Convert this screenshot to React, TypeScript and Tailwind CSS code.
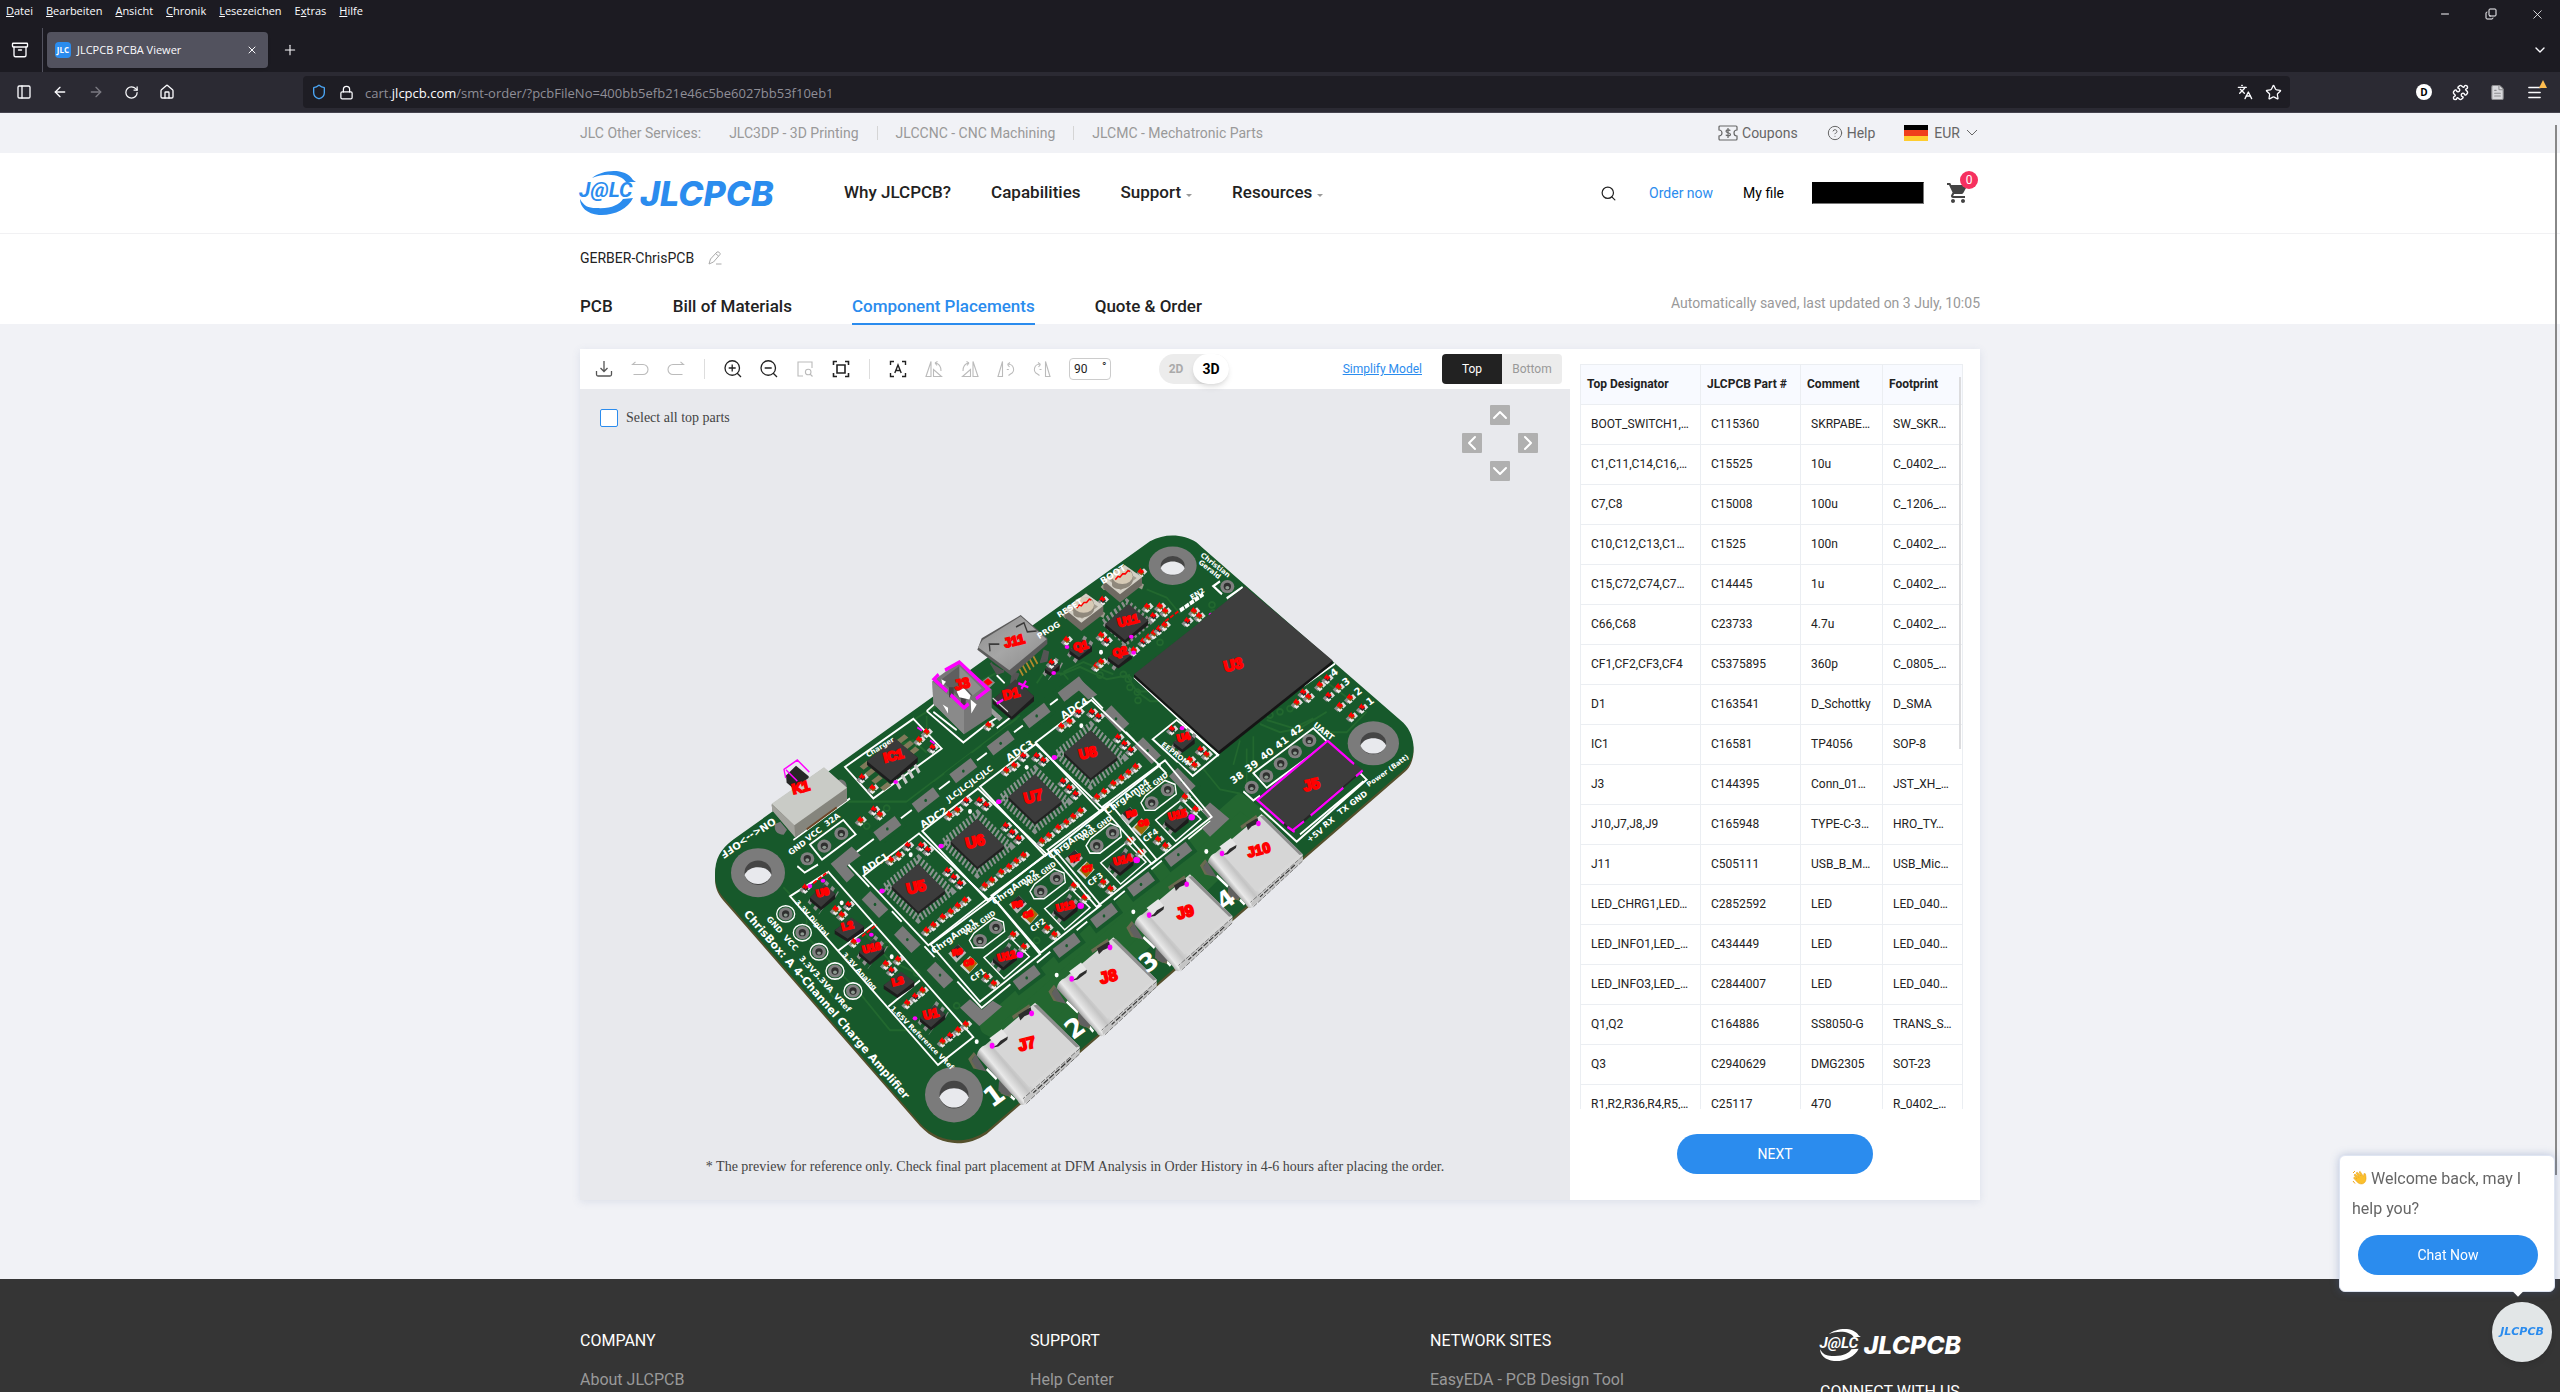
import React from "react";
import {
  ArrowLeft, ArrowRight, RotateCw, House, Shield, Lock, Languages, Star, Puzzle, X, Plus, Minus, Copy,
  ChevronDown, ChevronUp, ChevronLeft, ChevronRight, Search, CircleHelp, Menu, PanelLeft, Archive, FileText,
} from "lucide-react";
import { MdShoppingCart } from "react-icons/md";

/* ---------- Browser window ---------- */

const menus = ["Datei", "Bearbeiten", "Ansicht", "Chronik", "Lesezeichen", "Extras", "Hilfe"];

function IconButton({ label, children, className = "" }: { label: string; children: React.ReactNode; className?: string }) {
  return (
    <button type="button" aria-label={label} className={`flex shrink-0 items-center justify-center ${className}`}>
      {children}
    </button>
  );
}

function BrowserChrome() {
  return (
    <div className="shrink-0 bg-[#1c1b22] font-['Open_Sans',sans-serif] text-[#fbfbfe]">
      <div className="flex h-7 items-center justify-between pl-1.5">
        <div className="-mt-1.5 flex gap-[13px] text-[11px] leading-4">
          {menus.map((m) => (
            <button type="button" key={m}>
              {m === "Extras" ? <>E<u>x</u>tras</> : <><u>{m[0]}</u>{m.slice(1)}</>}
            </button>
          ))}
        </div>
        <div className="flex">
          <IconButton label="Minimize" className="w-[46px]"><Minus size={12} strokeWidth={2} /></IconButton>
          <IconButton label="Restore" className="w-[46px]"><Copy size={12} strokeWidth={2} className="-scale-x-100 rotate-180" /></IconButton>
          <IconButton label="Close window" className="w-[46px]"><X size={15} strokeWidth={1.3} /></IconButton>
        </div>
      </div>
      <div className="flex h-11 items-center">
        <IconButton label="Recent tabs" className="w-10"><Archive size={18} strokeWidth={1.8} /></IconButton>
        <div className="ml-0.5 h-11 w-px bg-[#52525e]" />
        <div className="ml-1 flex h-9 w-[221px] items-center rounded bg-[#52525e] pl-2 pr-2.5 shadow">
          <span className="flex h-4 w-4 items-center justify-center rounded-sm bg-[#2b8cee] text-[8px] font-bold">JLC</span>
          <span className="ml-1.5 flex-1 text-[11px]">JLCPCB PCBA Viewer</span>
          <IconButton label="Close tab"><X size={12} strokeWidth={2} /></IconButton>
        </div>
        <IconButton label="New tab" className="ml-3.5"><Plus size={16} strokeWidth={1.6} /></IconButton>
        <IconButton label="List all tabs" className="ml-auto mr-3"><ChevronDown size={16} strokeWidth={2} /></IconButton>
      </div>
      <div className="flex h-[41px] items-center border-b border-[#45444f] bg-[#2b2a33] pl-4 pr-[17px]">
        <div className="flex w-[287px] items-center gap-5">
          <IconButton label="Sidebar"><PanelLeft size={16} /></IconButton>
          <IconButton label="Back"><ArrowLeft size={16} /></IconButton>
          <IconButton label="Forward" className="text-[#7b7a82]"><ArrowRight size={16} /></IconButton>
          <IconButton label="Reload"><RotateCw size={15} /></IconButton>
          <IconButton label="Home"><House size={16} /></IconButton>
        </div>
        <div className="flex h-8 flex-1 items-center rounded bg-[#1e1d24] px-2">
          <Shield size={16} strokeWidth={2} className="text-[#4ba6f5]" />
          <Lock size={15} className="ml-3" />
          <div role="textbox" aria-label="Address" className="ml-[11px] flex-1 pt-0.5 text-[13px] leading-4 text-[#8f8e97]">
            cart.<span className="text-[#fbfbfe]">jlcpcb.com</span>/smt-order/?pcbFileNo=400bb5efb21e46c5be6027bb53f10eb1
          </div>
          <IconButton label="Translate page"><Languages size={16} /></IconButton>
          <IconButton label="Bookmark" className="ml-3"><Star size={17} strokeWidth={1.8} /></IconButton>
        </div>
        <div className="ml-[126px] flex items-center gap-5">
          <IconButton label="Account" className="h-4 w-4 rounded-full bg-white text-[10px] font-bold text-black">D</IconButton>
          <IconButton label="Extensions"><Puzzle size={17} /></IconButton>
          <IconButton label="Notes"><FileText size={17} className="fill-[#d8d8dc] text-[#8d8d90]" strokeWidth={1.5} /></IconButton>
          <div className="relative">
            <IconButton label="Menu"><Menu size={17} /></IconButton>
            <span className="absolute -right-1 -top-1 border-x-4 border-b-8 border-x-transparent border-b-[#ffbd4f]" />
          </div>
        </div>
      </div>
    </div>
  );
}

/* ---------- Site header ---------- */

function Logo({ className }: { className: string }) {
  return (
    <svg viewBox="0 0 199 44" className={className} role="img" aria-label="JLCPCB">
      <path d="M12 7C22-1 45-4 53 9L56 11 46 11C42 4 27 1 12 7Z" fill="currentColor" />
      <path d="M0 28C4 35 8 37 16 37C31 38 39 34 43 28L53 27C48 38 33 45 19 44C7 43 0 36 0 28Z" fill="currentColor" />
      <text x="-1" y="26" fill="currentColor" fontFamily="Roboto" fontStyle="italic" fontWeight="700" fontSize="21">J@LC</text>
      <text x="60" y="35" fill="currentColor" fontFamily="Inter" fontStyle="italic" fontWeight="800" fontSize="34">JLCPCB</text>
    </svg>
  );
}

function ServiceBar() {
  return (
    <div className="bg-[#f1f2f6]">
      <div className="mx-auto flex h-10 max-w-[1400px] items-center text-sm text-[#999]">
        <span>JLC Other Services:</span>
        <a href="#3d" className="ml-7">JLC3DP - 3D Printing</a>
        <span className="mx-[18px] h-3.5 w-px bg-[#d5d5d5]" />
        <a href="#cnc">JLCCNC - CNC Machining</a>
        <span className="mx-[18px] h-3.5 w-px bg-[#d5d5d5]" />
        <a href="#mc">JLCMC - Mechatronic Parts</a>
        <div className="ml-auto mr-0.5 flex items-center text-[#666]">
          <a href="#coupons" className="flex items-center gap-1">
            <svg width="20" height="16" viewBox="0 0 20 16" fill="none" stroke="currentColor" strokeWidth="1.2">
              <path d="M2 1h16a1 1 0 0 1 1 1v3a3 3 0 0 0 0 6v3a1 1 0 0 1-1 1H2a1 1 0 0 1-1-1v-3a3 3 0 0 0 0-6V2a1 1 0 0 1 1-1z" />
              <path d="M12.300 5.600c-.5-.9-4.300-1.200-4.300.6s4.500 1.300 4.500 3.200-4 1.700-4.700.3M10 3v10" />
            </svg>
            Coupons
          </a>
          <a href="#help" className="ml-[29px] flex items-center gap-1"><CircleHelp size={16} strokeWidth={1.5} />Help</a>
          <button type="button" className="ml-[29px] flex items-center">
            <svg width="24" height="16" viewBox="0 0 24 16"><path fill="#000" d="M0 0h24v6H0z" /><path fill="#f0401c" d="M0 5h24v6H0z" /><path fill="#ffcd2e" d="M0 11h24v5H0z" /></svg>
            <span className="ml-1.5">EUR</span>
            <svg className="ml-1.5" width="12" height="8" viewBox="0 0 12 8" fill="none" stroke="currentColor"><path d="M1 1l5 5 5-5" /></svg>
          </button>
        </div>
      </div>
    </div>
  );
}

function Caret() {
  return <span className="ml-[5px] mt-1 border-x-[3px] border-t-[3px] border-x-transparent border-t-[#999]" />;
}

function MainHeader() {
  return (
    <header className="border-b border-[#f1f1f3] bg-white">
      <div className="mx-auto flex h-20 max-w-[1400px] items-center text-[#222]">
        <a href="#home"><Logo className="h-11 w-[199px] overflow-visible text-[#2b8cee]" /></a>
        <nav className="ml-[65px] flex gap-10 text-[17px] font-medium">
          <a href="#why">Why JLCPCB?</a>
          <a href="#cap">Capabilities</a>
          <a href="#support" className="flex items-center">Support<Caret /></a>
          <a href="#resources" className="flex items-center">Resources<Caret /></a>
        </nav>
        <div className="ml-auto flex items-center text-sm">
          <IconButton label="Search"><Search size={17} strokeWidth={1.7} /></IconButton>
          <a href="#order" className="ml-8 text-[#2b8cee]">Order now</a>
          <a href="#files" className="ml-[30px] text-black">My file</a>
          <span className="ml-7 h-[22px] w-[112px] border border-[#777] border-l-black border-t-black bg-black" />
          <a href="#cart" aria-label="Cart" className="relative ml-[22px] mr-2.5 text-[#444]">
            <MdShoppingCart size={24} />
            <span className="absolute -right-2 -top-2.5 flex h-[18px] w-[18px] items-center justify-center rounded-full bg-[#f6305f] text-xs text-white">0</span>
          </a>
        </div>
      </div>
    </header>
  );
}

function ProjectTabs() {
  return (
    <div className="bg-white">
      <div className="mx-auto max-w-[1400px]">
        <div className="flex h-12 items-center gap-3.5 text-sm text-[#222]">
          GERBER-ChrisPCB
          <IconButton label="Rename">
            <svg width="14" height="14" viewBox="0 0 14 14" fill="none" stroke="#aaa"><path d="M1 13l1.500-5 6.500-7c1-.8 4 1 3 2.500l-6.500 7.500zM8 13h5.500M7.500 2.500l3 2.500" /></svg>
          </IconButton>
        </div>
        <div className="flex h-[42px] items-start justify-between">
          <nav className="flex gap-[60px] text-[17px] font-medium leading-6 text-[#222]">
            <a href="#pcb" className="h-[43px] pt-3">PCB</a>
            <a href="#bom" className="h-[43px] pt-3">Bill of Materials</a>
            <a href="#cpl" className="relative h-[43px] border-b-2 border-[#2b8cee] pt-3 text-[#2b8cee]">Component Placements</a>
            <a href="#quote" className="h-[43px] pt-3">Quote &amp; Order</a>
          </nav>
          <span className="pt-[11px] text-sm text-[#999]">Automatically saved, last updated on 3 July, 10:05</span>
        </div>
      </div>
    </div>
  );
}

/* ---------- Viewer toolbar ---------- */

const dark = "#222";
const pale = "#bbb";
const tools: { name: string; color: string; art: React.ReactNode; gap?: boolean }[] = [
  { name: "Download", color: "#555", art: <path strokeWidth="1.300" d="M9 1v10M5.500 8l3.500 3.500L12.500 8M1.500 11v3.500a1.500 1.500 0 0 0 1.500 1.500h12a1.500 1.500 0 0 0 1.500-1.500V11" /> },
  { name: "Undo", color: pale, art: <path d="M4.500 1.800L1.500 4.500h10.500a5 5 0 0 1 0 10H2.500" /> },
  { name: "Redo", color: pale, art: <path d="M13.500 1.800l3 2.700H6a5 5 0 0 0 0 10h9.500" /> },
  { name: "Zoom in", color: dark, gap: true, art: <path strokeWidth="1.300" d="M15.500 8A7.200 7.200 0 1 1 1 8a7.200 7.200 0 0 1 14.500 0zM13.500 13.500l3.500 3.500M8.200 4.500v7M4.700 8h7" /> },
  { name: "Zoom out", color: dark, art: <path strokeWidth="1.300" d="M15.500 8A7.200 7.200 0 1 1 1 8a7.200 7.200 0 0 1 14.500 0zM13.500 13.500l3.500 3.500M4.700 8h7" /> },
  { name: "Zoom area", color: pale, art: <path d="M7 16H2V2h14v6M15 12a2.800 2.800 0 1 1-5.600 0 2.800 2.800 0 0 1 5.600 0zM14.500 14.500l2 2" /> },
  { name: "Fit", color: dark, art: <path strokeWidth="1.6" d="M1.500 5V1.500H5M13 1.500h3.500V5M16.500 13v3.500H13M5 16.500H1.500V13M5 5h8v8H5z" /> },
  { name: "Rotate automatically", color: dark, gap: true, art: <path strokeWidth="1.400" d="M1.500 5V1.500H5M13 1.500h3.500V5M16.500 13v3.500H13M5 16.500H1.500V13M5.800 13L9 5l3.200 8M7 10.500h4" /> },
  { name: "Mirror left", color: pale, art: <path d="M6 1.500v15H1zM8.500 16.500h8l-8-7zM10 3c4 .5 6 4 6 8M10 3l2.500-1.500M10 3l2 2.500" /> },
  { name: "Mirror right", color: pale, art: <path d="M12 1.500v15h5zM9.500 16.500h-8l8-7zM8 3c-4 .5-6 4-6 8M8 3L5.500 1.500M8 3L6 5.500" /> },
  { name: "Rotate left", color: pale, art: <path d="M5.500 1.500v15H1zM10.500 4.500a5 5 0 0 1 3 9.500l-2 1.500M10.500 4.500l2.500-2M10.500 4.500l2 2.500M9.800 9.500h2" /> },
  { name: "Rotate right", color: pale, art: <path d="M12.500 1.500v15H17zM7.500 4.500a5 5 0 0 0-3 9.500l2 1.500M7.500 4.500L5 2.500M7.500 4.500l-2 2.500M6.500 9.500h2" /> },
];

function Toolbar() {
  return (
    <div className="flex h-10 items-center bg-white pl-[15px] pr-2">
      <div className="flex items-center gap-[18px]">
        {tools.map((t) => (
          <React.Fragment key={t.name}>
            {t.gap && <span className="mx-px h-5 w-px bg-[#ddd]" />}
            <IconButton label={t.name}>
              <svg width="18" height="18" viewBox="0 0 18 18" fill="none" stroke={t.color} strokeWidth="1.100">{t.art}</svg>
            </IconButton>
          </React.Fragment>
        ))}
      </div>
      <label className="ml-[18px] flex h-[22px] w-[42px] items-center rounded-sm border border-[#ccc] pl-1 text-xs text-[#222]">
        <input aria-label="Angle" defaultValue="90" className="w-7 bg-transparent outline-none" />
        <span className="-mt-1">°</span>
      </label>
      <div className="ml-12 flex h-[30px] w-[70px] items-center rounded-full bg-[#ececec] text-xs font-bold">
        <button type="button" className="flex-1 text-[#aaa]">2D</button>
        <button type="button" className="h-[30px] w-9 rounded-full bg-white text-sm text-black shadow-md">3D</button>
      </div>
      <a href="#simplify" className="ml-auto text-xs text-[#2b8cee] underline">Simplify Model</a>
      <div className="ml-5 flex overflow-hidden rounded-sm text-xs">
        <button type="button" className="h-[30px] w-[60px] bg-[#222] text-white">Top</button>
        <button type="button" className="h-[30px] w-[60px] bg-[#ececec] text-[#999]">Bottom</button>
      </div>
    </div>
  );
}

/* ---------- Circuit board ---------- */
/* Shapes use a 2220 x 1568 grid which is drawn at one third wide and 1/2.45 high. */

const KX = 1 / 3;
const KY = 1 / 2.45;
type P = [number, number];

const shift = (pts: P[], dx: number, dy: number): P[] => pts.map(([x, y]) => [x + dx, y + dy]);

function Passive({ at, gold = true }: { at: P; gold?: boolean }) {
  return (
    <g transform={`translate(${at[0]} ${at[1]})`}>
      <path d="M-18 4l10-8 10 9-9 7z" fill="#8c8c8c" />
      <path d="M-1 -5l10-7 10 9-9 7z" fill="#dcdcdc" />
      <path d="M-9 6l8 7 9-6-7-7z" fill="#e9e9e9" />
      <path d="M-11 -3l11-7 10 9-9 7z" fill={gold ? "#8a5a10" : "#2c2c2c"} />
      <path d="M-8 -2l6-6 3 6 6-4" stroke="#f00" strokeWidth="6" fill="none" />
    </g>
  );
}

function Chip({ at, w = 42, h = 32, pins = true }: { at: P; w?: number; h?: number; pins?: boolean }) {
  const [x, y] = at;
  return (
    <g>
      {pins && (
        <path d={`M${x - w} ${y + 8}L${x - 4} ${y + h + 10}M${x + 4} ${y - h}L${x + w + 4} ${y}`} stroke="#8f8f8f" strokeWidth="22" strokeDasharray="11 11" />
      )}
      <path d={`M${x - w} ${y + 5}L${x + 6} ${y - h + 3}L${x + w} ${y - 4}V${y + 8}L${x - 5} ${y + h + 8}L${x - w} ${y + 14}Z`} fill="#1d1d1d" />
      <path d={`M${x - w} ${y + 5}L${x + 6} ${y - h}L${x + w} ${y - 4}L${x - 5} ${y + h}Z`} fill="#3a3a3a" />
    </g>
  );
}

function UsbC({ at, k }: { at: P; k: number }) {
  return (
    <g transform={`translate(${at[0]} ${at[1]}) scale(${k})`}>
      <path d="M-60 35l50-28M-170 120l-14 14 12 18 22 4M-95 190l4 22 26 8" stroke="#6a6a50" strokeWidth="9" fill="none" />
      <path d="M-168 122l-12 16 14 18 30 8zM-100 185l-2 24 22 12 26-8z" fill="#606060" />
      <path d="M5 0L135 104V122L-22 240Q-36 248-46 232L-165 125Q-160 106-140 100Z" fill="url(#shell)" />
      <path d="M0 6L125 104L-12 200L-118 104Z" fill="#d6d6d6" />
      <path d="M0 6L12 4L135 104L125 106Z" fill="#8e8e8e" />
      <path d="M134 110L-28 230L-26 240L132 122Z" fill="#c4c4c4" />
      <path d="M136 108L-30 228M134 122L-24 242" stroke="#555" strokeWidth="2" strokeDasharray="14 4" fill="none" />
      <path d="M110 132L0 214" stroke="#333" strokeWidth="3" strokeDasharray="16 5" />
      <path d="M-44 28l36-18 4 14-22 8-12 10z" fill="#2c2c2c" />
      <path d="M-128 84l36-22 16 16-32 22z" fill="#e6e6e6" />
      <path d="M-120 106l14-6 10-10 22-10-2 8-26 16-14 2z" fill="#2c2c2c" />
      <circle cx="-5" cy="25" r="7" fill="#f0f" />
      <circle cx="-120" cy="102" r="7" fill="#f0f" />
    </g>
  );
}

function Button3D({ at }: { at: P }) {
  return (
    <g transform={`translate(${at[0]} ${at[1]})`}>
      <path d="M-58 4l-8 8 10 8 8-4zM50 0l14 6-6 12-10-4z" fill="#9a9a8c" />
      <path d="M-58 -4L6 -42L58 -12V8L-8 50L-58 16Z" fill="#6f6a62" />
      <path d="M-58 -4L6 -42L58 -12L-8 30Z" fill="#d4d0c6" />
      <path d="M-40 -4L4 -30L42 -10L-6 20Z" fill="#a39c90" />
      <path d="M-32 -8C-30 -32 24 -42 30 -18V-2C26 18 -26 24 -32 8Z" fill="#8f887c" />
      <ellipse cx="-1" cy="-14" rx="31" ry="19" fill="#d6cab6" />
      <path d="M-22 -6l8-8 6 2 8-8 8 0 8-8 6 2" stroke="#f00" strokeWidth="4" fill="none" />
    </g>
  );
}

function PlatedHole({ at, rx, ry }: { at: P; rx: number; ry: number }) {
  return (
    <g>
      <ellipse cx={at[0]} cy={at[1]} rx={rx} ry={ry} fill="#7b7b7b" />
      <ellipse cx={at[0]} cy={at[1]} rx={rx / 2} ry={ry / 2} fill="#454545" />
      <path
        d={`M${at[0] - rx / 2} ${at[1] + 6}C${at[0] - rx / 3} ${at[1] - ry / 3} ${at[0] + rx / 3} ${at[1] - ry / 3} ${at[0] + rx / 2} ${at[1] + 6}C${at[0] + rx / 3} ${at[1] + ry / 1.700} ${at[0] - rx / 3} ${at[1] + ry / 1.700} ${at[0] - rx / 2} ${at[1] + 6}Z`}
        fill="#e8e9ed"
      />
    </g>
  );
}

function Via({ at, ring = false }: { at: P; ring?: boolean }) {
  return (
    <g>
      {ring && <ellipse cx={at[0]} cy={at[1]} rx="27" ry="20" fill="none" stroke="#fff" strokeWidth="4" />}
      <ellipse cx={at[0]} cy={at[1]} rx="21" ry="16" fill="#808080" />
      <ellipse cx={at[0]} cy={at[1]} rx="11" ry="9" fill="#2f2f2f" />
      <ellipse cx={at[0]} cy={at[1] + 3} rx="6" ry="4" fill="#8d9a90" />
    </g>
  );
}

function Pad({ at, flip = false }: { at: P; flip?: boolean }) {
  const d = flip ? "M-40 -12L-14 -33L40 12L12 33Z" : "M-42 8L22 -32L42 -10L-22 30Z";
  return (
    <g transform={`translate(${at[0]} ${at[1]})`}>
      <path d={d} fill="#7a7a7a" stroke="#17592b" strokeWidth="20" />
      <path d={d} fill="#7a7a7a" />
      <circle r="4" fill="#17592b" />
    </g>
  );
}

const adcOffsets: P[] = [[0, 0], [177, -110], [350, -219], [517, -327]];
const adcParts: P[] = [[573, 835], [597, 823], [624, 800], [664, 800], [684, 811], [743, 862], [762, 878], [781, 893], [680, 1008], [701, 995], [729, 975], [753, 962], [774, 948], [796, 934]];
const ampOffsets: P[] = [[0, 0], [182, -120], [350, -232], [515, -337]];
const ampParts: P[] = [[940, 1018], [972, 1048], [860, 1122], [882, 1138]];

const loose: P[] = [
  [487, 633], [518, 659], [658, 541], [698, 560], [680, 522], [866, 505], [522, 712], [540, 724], [482, 738],
  [316, 903], [407, 956], [426, 970], [446, 945], [462, 1036], [558, 1090], [575, 1106], [595, 1079], [622, 1186], [646, 1170], [668, 1155],
  [728, 1280], [751, 1266], [775, 1252], [798, 1238], [1055, 352],
  [1100, 296], [1204, 285], [1220, 298], [1190, 360], [1204, 350], [1208, 198], [1323, 130],
  [1342, 215], [1360, 238], [1380, 214], [1396, 226], [1330, 300], [1346, 290], [1362, 280], [1378, 270], [1394, 260], [1302, 322],
  [1462, 250], [1482, 226], [1498, 238], [1416, 515], [1470, 590], [1484, 603], [1502, 565], [1520, 577],
  [1790, 450], [1810, 425], [1826, 436], [1860, 407], [1886, 433], [1920, 458], [1955, 483], [1882, 390], [1916, 412], [1950, 438], [1986, 462],
];

const padsA: P[] = [[562, 757], [677, 687], [790, 615], [902, 547], [1010, 480], [1115, 415], [1435, 820], [1323, 893], [1212, 970], [1100, 1043], [980, 1122]];
const padsB: P[] = [[1248, 487], [1343, 565], [1447, 640], [525, 942], [622, 1028], [720, 1115]];
const vias: P[] = [[322, 830], [373, 799], [424, 768], [1655, 655], [1699, 627], [1742, 597], [1785, 568], [1828, 540], [1582, 163]];
const ringVias: P[] = [[257, 965], [307, 1011], [357, 1058], [405, 1105], [459, 1154]];

const outline =
  "M45 870C45 830 60 808 100 783L1350 52C1395 32 1450 34 1490 55L1510 70L2110 497C2150 530 2150 585 2115 610L860 1497C800 1530 720 1530 660 1478L70 925C50 905 45 890 45 870Z";

/* text on the board: [text, u, v, angle, size] */
const silk: [string, number, number, number, number][] = [
  ["ChrisBox: A 4-Channel Charge Amplifier", 130, 966, 49, 11],
  ["ADC1", 492, 868, -32, 10], ["ADC2", 668, 756, -32, 10], ["ADC3", 926, 592, -32, 10], ["ADC4", 1090, 488, -32, 10],
  ["JLCJLCJLCJLC", 746, 692, -36, 8],
  ["ChrgAmp1", 702, 1064, -36, 9], ["ChrgAmp2", 884, 944, -36, 9], ["ChrgAmp3", 1052, 832, -36, 9], ["ChrgAmp4", 1222, 722, -36, 9],
  ["Vout GND", 796, 1020, -36, 7], ["Vout GND", 978, 900, -36, 7], ["Vout GND", 1146, 788, -36, 7], ["Vout GND", 1314, 682, -36, 7],
  ["CF1", 818, 1132, -36, 8], ["CF2", 998, 1010, -36, 8], ["CF3", 1170, 898, -36, 8], ["CF4", 1336, 790, -36, 8],
  ["GND", 198, 978, 48, 8], ["VCC", 248, 1024, 48, 8], ["3.3V", 296, 1075, 48, 8], ["3.3VA", 338, 1112, 48, 8], ["VRef", 400, 1168, 48, 8],
  ["GND", 272, 822, -36, 8], ["VCC", 324, 788, -36, 8], ["32A", 380, 752, -36, 8],
  ["3.3V Digital", 284, 938, 48, 7], ["3.3V Analog", 426, 1066, 48, 7], ["1.65V Reference VRef", 570, 1198, 45, 7],
  ["1", 876, 1442, -36, 27], ["2", 1118, 1275, -36, 26], ["3", 1340, 1112, -36, 25], ["4", 1572, 958, -36, 24],
  ["38", 1600, 648, -36, 10], ["39", 1644, 620, -36, 10], ["40", 1690, 590, -36, 10], ["41", 1734, 562, -36, 10], ["42", 1778, 533, -36, 10],
  ["4", 1900, 385, -36, 10], ["3", 1936, 408, -36, 10], ["2", 1972, 432, -36, 10], ["1", 2008, 456, -36, 10],
  ["+5V", 1828, 790, -36, 8], ["RX", 1876, 755, -36, 8], ["TX", 1920, 724, -36, 8], ["GND", 1956, 702, -36, 8],
  ["Power (Batt)", 2006, 655, -36, 7], ["UART", 1838, 505, 38, 8],
  ["Christian", 1500, 88, 38, 7], ["Gerald", 1494, 106, 38, 7], ["EN2", 1476, 196, -32, 7],
  ["BOOT", 1208, 158, -32, 9], ["RESET", 1078, 240, -32, 8], ["PROG", 1018, 292, -32, 8],
  ["Charger", 504, 582, -32, 7], ["EEPROM", 1382, 552, 38, 7],
  ["ON<-->OFF", 218, 728, 146, 10],
];

/* reference designators: [text, u, v, size] */
const refs: [string, number, number, number][] = [
  ["U5", 648, 899, 15], ["U6", 825, 787, 15], ["U7", 1000, 677, 15], ["U8", 1163, 570, 14],
  ["U3", 1600, 354, 15], ["J5", 1834, 648, 15], ["IC1", 580, 577, 13], ["K1", 302, 655, 14], ["J3", 786, 401, 14], ["J11", 943, 296, 13], ["D1", 933, 425, 13],
  ["J7", 980, 1283, 16], ["J8", 1225, 1118, 16], ["J9", 1455, 960, 16], ["J10", 1676, 808, 14],
  ["U11", 1284, 246, 12], ["Q1", 1142, 308, 11], ["Q2", 1260, 322, 11], ["U4", 1450, 532, 10],
  ["U9", 368, 912, 10], ["L2", 442, 994, 10], ["U10", 515, 1048, 10], ["L3", 593, 1130, 10], ["U1", 692, 1210, 12],
  ["U12", 920, 1068, 10], ["U13", 1096, 946, 10], ["U14", 1268, 832, 10], ["U15", 1432, 722, 10],
  ["R9", 772, 1058, 8], ["R8", 952, 941, 8], ["R7", 1126, 828, 8], ["R6", 1294, 719, 8],
  ["C9", 806, 1084, 8], ["C8", 984, 966, 8], ["C7", 1162, 854, 8], ["C6", 1330, 742, 8],
];

function Board() {
  return (
    <svg width="750" height="630" viewBox="0 0 750 630" className="mx-auto block overflow-visible" role="img" aria-label="3D board preview">
      <defs>
        <linearGradient id="shell" gradientUnits="userSpaceOnUse" x1="-105" y1="185" x2="-60" y2="140">
          <stop offset="0" stopColor="#8d8d8d" /><stop offset=".3" stopColor="#e9e9e9" /><stop offset=".7" stopColor="#c4c4c4" /><stop offset="1" stopColor="#d8d8d8" />
        </linearGradient>
        <linearGradient id="metal" x1="0" y1="0" x2="1" y2="1">
          <stop offset="0" stopColor="#8c8c8c" /><stop offset=".5" stopColor="#a6a6a6" /><stop offset="1" stopColor="#8a8a8a" />
        </linearGradient>
        <clipPath id="pcb"><path d={outline} /></clipPath>
      </defs>
      <g transform={`scale(${KX} ${KY})`}>
        <path d={outline} transform="translate(0 7)" fill="#55502c" />
        <path d={outline} fill="#17592b" />
        <g clipPath="url(#pcb)" fill="none" stroke="#22682f" strokeWidth="5">
          <path d="M860 1240L1620 690L1700 740L1000 1300Z" fill="#236730" stroke="#236730" strokeWidth="40" strokeLinejoin="round" />
          <path d="M440 690L620 690L960 480M620 500L760 430L900 370M680 480v40l-40 40M250 900l70 60v60l170 150 80 80h100M480 1000l90 80 80 30" />
          <path d="M1080 380l60-20 80 30 70-10M1090 372l60-24 90 30M1280 380l30 40h50M1310 420l40 24 60 0M1500 600l60 60 60 10M1640 560v100M1660 530v100M1680 500l60 20 60-10 80-40M1620 540l-20 60M1700 490l80 20 60-24M1340 170l60 20 40 40M1850 380l100 60M2000 470l-60 50-90 0" />
          <path d="M1010 400l20-24 60 0 20 20M340 1110l60 60M560 560l80-20 40 30" />
          {[[1285, 390], [1290, 410], [1312, 422], [1314, 442], [1690, 462], [1710, 478], [1740, 470], [1536, 208], [1540, 228], [1380, 300], [1270, 378], [560, 706], [500, 750], [1200, 380], [1770, 462], [1626, 498], [650, 1110], [560, 1040], [770, 1190], [1010, 1030]].map(([x, y], i) => (
            <ellipse key={i} cx={x} cy={y} rx="9" ry="7" />
          ))}
        </g>

        {/* silkscreen frames */}
        <g fill="none" stroke="#fff" strokeWidth="5">
          <path d="M435 835L1135 400L1535 735L845 1195Z" />
          <path d="M640 487L725 560L520 682L435 605Z" />
          <path d="M680 468L790 545L860 500L900 480M700 470L770 515M760 410L680 468M890 380l24 20M1000 440l-110 70" />
          <path d="M385 862L820 1267L714 1335L270 922Z" />
          <path d="M415 1055L520 990M565 1192L660 1128" />
          <path d="M430 735L467 770L366 832L330 795Z M292 848l22 16 40-20M280 784l170-102" />
          <path d="M1430 490L1555 575L1478 627L1358 537Z" />
          <path d="M1302 385L1556 578M1660 620L1840 510L1884 545L1700 656ZM1630 665l30 22 20-12" />
          <path d="M1680 706L1790 788L2000 636L1980 620M1800 770L1990 640M1812 406L1905 352" />
          <path d="M1560 150l-20 12 26 20M1580 192l48-28" strokeWidth="6" />
          <path d="M860 1345l30 25M1100 1180l34 26M1330 1022l34 26M1550 872l34 26M930 1410l14 10M1166 1240l14 14M1398 1080l14 12M1620 930l14 12" strokeWidth="7" />
          <path d="M1440 222l70-40" strokeWidth="10" strokeDasharray="14 3" />
        </g>
        <g fill="#fff">
          {[[830, 1278], [1070, 1115], [1300, 960], [1519, 812], [632, 820], [810, 714], [980, 606], [1144, 504], [425, 938], [575, 1070], [1203, 324]].map(([x, y], i) => <circle key={i} cx={x} cy={y} r="6" />)}
        </g>

        {padsA.map((p, i) => <Pad key={i} at={p} />)}
        {padsB.map((p, i) => <Pad key={i} at={p} flip />)}
        <g fill="#7a7a7a">
          <path d="M392 842L455 800L482 822L440 848L464 870L440 888Z" />
          <path d="M1078 422L1135 386L1192 428L1165 440L1132 414L1102 440Z" />
          <path d="M780 1195L810 1174L846 1200L878 1178L906 1192L838 1240Z" />
          <path d="M1505 712L1530 692L1588 732L1530 776L1506 756L1532 738Z" />
        </g>

        {/* converter channels */}
        {adcOffsets.map(([dx, dy], i) => (
          <g key={i}>
            <path transform={`translate(${dx} ${dy})`} d="M490 872L657 768L862 928L685 1042Z" fill="none" stroke="#fff" strokeWidth="5" />
            <path transform={`translate(${dx} ${dy})`} d="M556 900L655 832L752 910L655 976Z" fill="none" stroke="#8b9390" strokeWidth="22" strokeDasharray="6 6" />
            <path transform={`translate(${dx} ${dy})`} d="M575 899L655 842L735 910V916L655 966L575 905Z" fill="#222" />
            <path transform={`translate(${dx} ${dy})`} d="M575 897L655 842L735 908L655 960Z" fill="#3c3c3c" />
            <ellipse cx={546 + dx} cy={909 + dy} rx="8" ry="6" fill="#f0f" />
            {shift(adcParts, dx * 0.99, dy).map((p, j) => <Passive key={j} at={p} gold={j < 2 || j > 7} />)}
          </g>
        ))}

        {/* amplifier channels */}
        {ampOffsets.map(([dx, dy], i) => (
          <g key={i} transform={`translate(${dx} ${dy})`}>
            <path d="M692 1040L880 926L1020 1064L840 1180Z" fill="none" stroke="#fff" strokeWidth="5" />
            <path d="M808 1030L822 1012L880 975L910 985L914 1008L850 1048L820 1048Z" fill="none" stroke="#fff" strokeWidth="4" />
            <path d="M852 1072L930 1022L988 1070L912 1124Z" fill="none" stroke="#fff" strokeWidth="4" />
            <Via at={[840, 1030]} />
            <Via at={[888, 998]} />
            <path d="M745 1062l30-22 24 20-30 24z" fill="#b9b9b9" />
            <path d="M752 1056l22-16 20 16-22 18z" fill="#2d2d2d" />
            <path d="M780 1092l30-24 24 20-28 24z" fill="#d5d5d5" />
            <path d="M788 1090l24-20 20 16-22 22z" fill="#9a6c08" />
            <Chip at={[915, 1070]} w={36} h={26} />
            <ellipse cx="960" cy="1065" rx="10" ry="8" fill="#f0f" />
            {ampParts.map((p, j) => <Passive key={j} at={p} />)}
          </g>
        ))}

        {vias.map((p, i) => <Via key={i} at={p} />)}
        {ringVias.map((p, i) => <Via key={i} at={p} ring />)}
        <Chip at={[368, 920]} w={38} h={28} />
        <Chip at={[448, 1000]} w={44} h={26} pins={false} />
        <Chip at={[515, 1054]} w={38} h={28} />
        <Chip at={[597, 1135]} w={46} h={28} pins={false} />
        <Chip at={[698, 1215]} w={38} h={28} />
        <Chip at={[1452, 540]} w={32} h={22} />
        <Chip at={[1142, 314]} w={34} h={22} />
        <Chip at={[1260, 332]} w={36} h={24} />
        <Chip at={[1057, 360]} w={22} h={14} />
        <path d="M1210 250L1280 200L1350 250L1277 302Z" fill="none" stroke="#8b8b8b" strokeWidth="14" strokeDasharray="7 7" />
        <Chip at={[1280, 250]} w={64} h={44} pins={false} />
        <g fill="#807a5a">
          {[[495, 600], [510, 617], [530, 635], [556, 652], [607, 535], [624, 550], [640, 565]].map(([x, y], i) => <path key={i} d={`M${x - 16} ${y + 4}l22-14 12 8-22 14z`} />)}
        </g>
        <path d="M590 650l70-48" stroke="#c9c9c9" strokeWidth="26" strokeDasharray="9 14" />
        <Chip at={[577, 586]} w={76} h={52} pins={false} />
        <path d="M652 508l14 8M690 540l14 8" stroke="#f0f" strokeWidth="5" />
        {loose.map((p, i) => <Passive key={i} at={p} gold={i % 3 !== 0} />)}
        <path d="M340 890l44-28M486 1020l44-28M1396 248l42-26" stroke="#f00" strokeWidth="5" strokeDasharray="12 5" />
        <g fill="#f0f">
          {[[369, 884], [330, 897], [514, 1016], [475, 1030], [645, 1221], [587, 642], [1533, 232], [1294, 286], [1301, 325], [1101, 311], [1061, 375], [1446, 510]].map(([x, y], i) => <ellipse key={i} cx={x} cy={y} rx="7" ry="5" />)}
        </g>

        {/* main module and display header */}
        <path d="M1302 380L1635 165L1898 346V352L1558 574L1302 386Z" fill="#151515" />
        <path d="M1302 378L1635 163L1898 344L1556 566Z" fill="#3e3e3e" />
        <path d="M1672 686L1883 541L1988 616L1775 766Z" fill="#262626" />
        <path d="M1672 686L1883 541L1988 612L1775 758Z" fill="#3c3c3c" />
        <path d="M1883 541L1672 686L1752 744M1883 541L1962 598M1775 762L1812 738M1832 724L1930 656M1988 614L1968 628M1762 752l22 12" fill="none" stroke="#f0f" strokeWidth="6" />

        {/* micro USB */}
        <path d="M872 350l20 26 20-6M940 370l-6 26 14-6 8-14M1030 320l14 4-4 20-20 4" fill="#555" stroke="#555" strokeWidth="6" />
        <path d="M960 372l54-36" stroke="#b38a2c" strokeWidth="26" strokeDasharray="5 8" />
        <path d="M845 290L962 233L1042 290V304L935 382L832 318Z" fill="#5b5b5b" />
        <path d="M848 294L962 236L1040 292L928 368L834 312Z" fill="url(#metal)" />
        <path d="M870 322l-2-18 30 0M948 262l24-10 10 22 28-2" fill="none" stroke="#3b3b3b" strokeWidth="4" />

        {/* diode and battery socket */}
        <path d="M845 396l20-12 20 14-18 14z" fill="#8d8d8d" />
        <path d="M850 396l14-8 14 10-14 8z" fill="#f00" />
        <path d="M868 455l40 30-10 8-36-28z" fill="#9c9c9c" />
        <Chip at={[940, 436]} w={62} h={46} pins={false} />
        <path d="M878 436l46 34" stroke="#ddd" strokeWidth="3" />
        <path d="M955 400l30 10M978 394l-14 20M890 450l20-10" stroke="#f0f" strokeWidth="6" />
        <path d="M697 395L778 347L875 415V480L792 525L700 450Z" fill="#777" />
        <path d="M697 395L792 462V525L700 450Z" fill="#8a8a8a" />
        <path d="M722 392L778 358L846 412L790 446Z" fill="#5f5f5f" />
        <path d="M778 358L846 412L818 430L778 392Z" fill="#8d8d8d" />
        <path d="M754 410v24M790 432v24" stroke="#444" strokeWidth="14" />
        <path d="M770 420l22-8 20 18-4 10-30-6zM812 440l18 12-16 22zM724 390l14 6-10 10zM728 452l16 8v14z" fill="#fff" />
        <path d="M735 368L778 348L865 415L828 438M716 378l-14 12 40 30M752 428l40 32 14-10" fill="none" stroke="#f0f" strokeWidth="9" />

        {/* slide switch */}
        <path d="M225 745l16-6 20 20-10 12c-20 0-30-10-26-26zM412 638c18-8 34 8 26 24z" fill="#777" />
        <path d="M258 626l30-24 38 26v24l-36 12-30-20z" fill="#262626" />
        <path d="M257 632L252 611L292 588L328 618M258 612l34 28" fill="none" stroke="#f0f" strokeWidth="4" />
        <path d="M215 697L372 607L441 657V688L286 778L217 712Z" fill="#85857d" />
        <path d="M215 697L283 748L286 778L217 712Z" fill="#a2a29c" />
        <path d="M215 695L372 606L441 656L283 748Z" fill="#c9cbc6" />
        <path d="M320 758l90-54" stroke="#6e4526" strokeWidth="5" />

        <Button3D at={[1268, 152]} />
        <Button3D at={[1152, 222]} />
        <UsbC at={[1680, 720]} k={0.95} />
        <UsbC at={[1465, 868]} k={0.98} />
        <UsbC at={[1235, 1022]} k={1} />
        <UsbC at={[1000, 1183]} k={1.03} />

        <PlatedHole at={[174, 864]} rx={81} ry={60} />
        <PlatedHole at={[762, 1408]} rx={87} ry={68} />
        <PlatedHole at={[1418, 112]} rx={72} ry={47} />
        <PlatedHole at={[2020, 547]} rx={77} ry={54} />
      </g>

      <g fill="#fff" fontFamily="'DejaVu Sans', sans-serif" fontWeight="700">
        {silk.map(([t, u, v, a, s], i) => (
          <text key={i} fontSize={s} transform={`translate(${u * KX} ${v * KY}) rotate(${a})`}>{t}</text>
        ))}
      </g>
      <g fill="#f00" stroke="#f00" strokeWidth="1.800" fontFamily="'Liberation Sans', sans-serif" fontWeight="700" textAnchor="middle">
        {refs.map(([t, u, v, s], i) => (
          <text key={i} fontSize={s} dy={s * 0.35} transform={`translate(${u * KX} ${v * KY}) rotate(-14)`}>{t}</text>
        ))}
      </g>
    </svg>
  );
}

function Viewer() {
  const arrow = "flex h-5 w-5 items-center justify-center overflow-hidden rounded-[1px] bg-[#b0b0b0] text-white";
  return (
    <section className="min-w-0 flex-1 bg-[#e8e9ed]">
      <Toolbar />
      <div className="flex items-start justify-between pl-5 pr-8 pt-4">
        <label className="mt-[3px] flex items-center gap-2 font-['Liberation_Serif',serif] text-sm leading-5 text-[#444]">
          <input type="checkbox" className="h-[18px] w-[18px] appearance-none rounded-[2px] border border-[#2b8cee] bg-white" />
          Select all top parts
        </label>
        <div className="grid grid-cols-3 gap-2">
          <button type="button" aria-label="Up" className={`col-start-2 ${arrow}`}><ChevronUp size={24} className="shrink-0" /></button>
          <button type="button" aria-label="Left" className={`col-start-1 ${arrow}`}><ChevronLeft size={24} className="shrink-0" /></button>
          <button type="button" aria-label="Right" className={`col-start-3 ${arrow}`}><ChevronRight size={24} className="shrink-0" /></button>
          <button type="button" aria-label="Down" className={`col-start-2 ${arrow}`}><ChevronDown size={24} className="shrink-0" /></button>
        </div>
      </div>
      <div className="pt-[39px]"><Board /></div>
      <p className="pb-[18px] pt-px text-center font-['Liberation_Serif',serif] text-sm leading-[31px] text-[#444]">
        * The preview for reference only. Check final part placement at DFM Analysis in Order History in 4-6 hours after placing the order.
      </p>
    </section>
  );
}

/* ---------- Parts list ---------- */

const parts = [
  ["BOOT_SWITCH1,…", "C115360", "SKRPABE…", "SW_SKR…"],
  ["C1,C11,C14,C16,…", "C15525", "10u", "C_0402_…"],
  ["C7,C8", "C15008", "100u", "C_1206_…"],
  ["C10,C12,C13,C1…", "C1525", "100n", "C_0402_…"],
  ["C15,C72,C74,C7…", "C14445", "1u", "C_0402_…"],
  ["C66,C68", "C23733", "4.7u", "C_0402_…"],
  ["CF1,CF2,CF3,CF4", "C5375895", "360p", "C_0805_…"],
  ["D1", "C163541", "D_Schottky", "D_SMA"],
  ["IC1", "C16581", "TP4056", "SOP-8"],
  ["J3", "C144395", "Conn_01…", "JST_XH_…"],
  ["J10,J7,J8,J9", "C165948", "TYPE-C-3…", "HRO_TY…"],
  ["J11", "C505111", "USB_B_M…", "USB_Mic…"],
  ["LED_CHRG1,LED…", "C2852592", "LED", "LED_040…"],
  ["LED_INFO1,LED_…", "C434449", "LED", "LED_040…"],
  ["LED_INFO3,LED_…", "C2844007", "LED", "LED_040…"],
  ["Q1,Q2", "C164886", "SS8050-G", "TRANS_S…"],
  ["Q3", "C2940629", "DMG2305", "SOT-23"],
  ["R1,R2,R36,R4,R5,…", "C25117", "470", "R_0402_…"],
];

function PartsPanel() {
  return (
    <aside className="flex w-[410px] shrink-0 flex-col items-center bg-white pt-[15px]">
      <div className="relative h-[745px] w-full overflow-hidden pl-2.5 pr-[17px]">
        <table className="w-full table-fixed border-collapse text-left text-xs text-[#222]">
          <colgroup><col className="w-[120px]" /><col className="w-[100px]" /><col className="w-[82px]" /><col /></colgroup>
          <thead>
            <tr className="h-10 bg-[#f8faff]">
              {["Top Designator", "JLCPCB Part #", "Comment", "Footprint"].map((h) => (
                <th key={h} scope="col" className="whitespace-nowrap border border-[#ebeef2] pb-0.5 pl-1.5 font-bold">{h}</th>
              ))}
            </tr>
          </thead>
          <tbody>
            {parts.map((row) => (
              <tr key={row[0]} className="h-10">
                {row.map((c, i) => <td key={i} className="whitespace-nowrap border border-[#ebeef2] pb-0.5 pl-2.5">{c}</td>)}
              </tr>
            ))}
          </tbody>
        </table>
        <span className="absolute right-[19px] top-[13px] h-[372px] w-0.5 bg-[#dcdcde]" />
      </div>
      <button type="button" className="mt-[25px] h-10 w-[196px] rounded-full bg-[#2b8cee] text-sm text-white">NEXT</button>
    </aside>
  );
}

/* ---------- Footer and chat ---------- */

function Footer() {
  return (
    <footer className="mt-[79px] bg-[#353535] pb-16">
      <div className="mx-auto flex max-w-[1400px] pt-[50px] text-base text-[#999]">
        <div className="w-[450px]"><h2 className="mb-[15px] text-white">COMPANY</h2><a href="#about">About JLCPCB</a></div>
        <div className="w-[400px]"><h2 className="mb-[15px] text-white">SUPPORT</h2><a href="#helpcenter">Help Center</a></div>
        <div className="w-[390px]"><h2 className="mb-[15px] text-white">NETWORK SITES</h2><a href="#easyeda">EasyEDA - PCB Design Tool</a></div>
        <div>
          <Logo className="h-8 w-[145px] overflow-visible text-white" />
          <h2 className="mt-[19px] text-white">CONNECT WITH US</h2>
        </div>
      </div>
    </footer>
  );
}

function Chat() {
  return (
    <div className="fixed bottom-[30px] right-2 flex flex-col items-end">
      <div className="relative -mr-[3px] w-[216px] rounded-md border border-[#dfe5f2] bg-white px-3 pb-4 pt-2 shadow-[0_0_8px_rgba(80,110,170,0.35)]">
        <p className="text-base leading-[30px] text-[#666]">
          <svg className="mr-1 inline-block align-[-1px]" width="15" height="15" viewBox="0 0 15 15" role="img" aria-label="Waving hand">
            <path d="M2 5l1-1 4 3.500L4 3l1.200-.8L9 6 7 2l1.200-.6 3.300 5 .5-3 1.400.4c.8 3 1.300 7-1 9-2 1.800-5 1.500-7-.5L1.500 8l1-1L5 9z" fill="#fbc02d" stroke="#e59c14" strokeWidth=".5" />
            <path d="M1 3l2-2M1 11l2 2.500" stroke="#f0a21a" fill="none" />
          </svg>
          Welcome back, may I help you?
        </p>
        <button type="button" className="ml-1.5 mt-[11px] h-10 w-[180px] rounded-full bg-[#2b8cee] text-sm text-white">Chat Now</button>
        <span className="absolute -bottom-1 right-8 h-2 w-2 rotate-45 bg-white" />
      </div>
      <button type="button" className="mt-2.5 h-[60px] w-[60px] rounded-full bg-[#e2e6e7] font-['DejaVu_Sans',sans-serif] text-[11px] font-bold italic text-[#2b8cee] shadow-md">JLCPCB</button>
    </div>
  );
}

export default function App() {
  return (
    <div className="flex h-screen flex-col overflow-hidden bg-[#f1f2f6] font-['Roboto',sans-serif]">
      <BrowserChrome />
      <div className="relative min-h-0 flex-1 overflow-hidden">
        <ServiceBar />
        <MainHeader />
        <ProjectTabs />
        <main className="mx-auto mt-[25px] flex max-w-[1400px] shadow-[0_2px_8px_rgba(100,120,170,0.15)]">
          <Viewer />
          <PartsPanel />
        </main>
        <Footer />
        <span className="absolute right-[3px] top-3 h-[1050px] w-0.5 bg-[#888]" />
      </div>
      <Chat />
    </div>
  );
}
